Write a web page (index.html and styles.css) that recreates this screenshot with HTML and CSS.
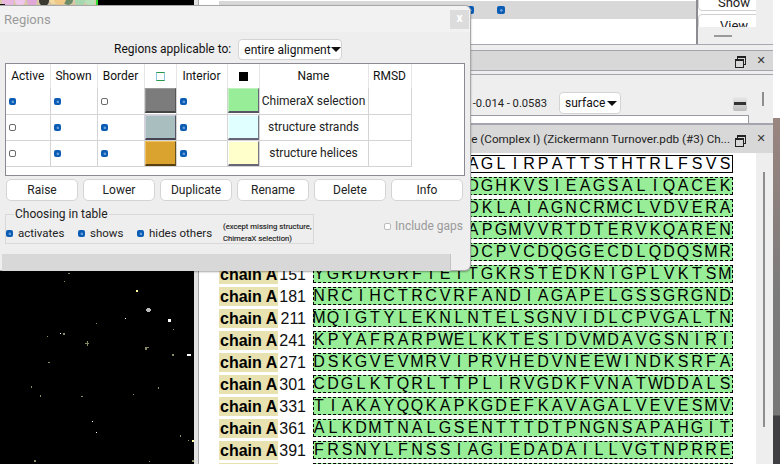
FILE: index.html
```html
<!DOCTYPE html>
<html lang="en">
<head>
<meta charset="utf-8">
<title>Regions</title>
<link rel="stylesheet" href="styles.css">
</head>
<body>
<div class="graphics">
  <svg class="scene" width="194" height="464" viewBox="0 0 194 464">
    <rect x="0" y="0" width="96" height="6" fill="#d8c8a8"/>
    <circle cx="8" cy="2" r="6" fill="#e8b8e0"/><circle cx="20" cy="1" r="5" fill="#f0c8ec"/><circle cx="32" cy="1" r="5" fill="#e0a8d8"/>
    <rect x="0" y="4" width="5" height="2" fill="#111"/>
    <circle cx="44" cy="1" r="5" fill="#3a3a30"/><circle cx="54" cy="0" r="4" fill="#f4dca0"/><circle cx="58" cy="0" r="4" fill="#e8d090"/>
    <circle cx="68" cy="0" r="5" fill="#6a8a68"/><circle cx="60" cy="-1" r="6" fill="#f0c888"/>
    <circle cx="80" cy="1" r="5" fill="#a8d8b0"/><circle cx="90" cy="1" r="5" fill="#b8e0b8"/>
    <rect x="96" y="0" width="2" height="6" fill="#30e030"/>
    <g fill="#8a8a60">
      <rect x="68" y="273" width="2" height="1"/><rect x="64" y="281" width="1" height="1"/><rect x="96" y="323" width="1" height="1"/>
      <rect x="63" y="333" width="2" height="2"/><rect x="47" y="336" width="1" height="1"/><rect x="85" y="343" width="4" height="1"/>
      <rect x="87" y="341" width="1" height="5"/><rect x="145" y="347" width="2" height="3"/><rect x="147" y="347" width="2" height="1"/>
      <rect x="172" y="354" width="2" height="2"/><rect x="173" y="329" width="1" height="1"/><rect x="48" y="362" width="2" height="1"/>
      <rect x="31" y="386" width="1" height="2"/><rect x="40" y="395" width="1" height="2"/><rect x="81" y="396" width="2" height="1"/>
      <rect x="133" y="394" width="1" height="1"/><rect x="158" y="387" width="1" height="2"/><rect x="180" y="435" width="1" height="2"/>
      <rect x="188" y="440" width="1" height="1"/><rect x="34" y="460" width="2" height="2"/><rect x="149" y="461" width="1" height="1"/><rect x="192" y="460" width="2" height="2"/>
    </g>
    <g fill="#fff">
      <rect x="125" y="318" width="1" height="1"/><rect x="60" y="333" width="1" height="1"/><rect x="92" y="421" width="1" height="1"/><rect x="96" y="432" width="1" height="1"/>
      <rect x="168" y="319" width="3" height="3"/><rect x="187" y="354" width="4" height="2"/>
    </g>
    <g fill="#bbb"><rect x="147" y="308" width="3" height="4"/><rect x="146" y="309" width="5" height="2"/></g>
    <g fill="#ffffa0"><rect x="136" y="290" width="2" height="2"/><rect x="192" y="440" width="2" height="2"/></g>
  </svg>
</div>
<div class="sash"></div>
<div class="main">
  <div class="top-panel">
    <div class="top-list">
      <div class="top-row"><span class="cb on top-a"></span><span class="cb on top-b"></span></div>
    </div>
    <div class="top-side">
      <div class="side-buttons">
        <div class="side-btn side-show"><span>Show</span></div>
        <div class="side-btn side-view"><span>View</span></div>
      </div>
      <div class="handle"></div>
    </div>
  </div>
  <div class="dock-title dock-one">
    <span class="dock-text"></span>
    <span class="float-icon"></span>
    <span class="close-icon">✕</span>
  </div>
  <div class="histogram-panel">
    <div class="histogram-main">
      <div class="controls">
        <span class="range">-0.014 - 0.0583</span>
        <span class="combo surface">surface<span class="arrow"></span></span>
        <span class="minus"></span>
      </div>
      <div class="hist-box"></div>
    </div>
    <div class="scroll-strip"><span class="thumb thumb-short"></span></div>
  </div>
  <div class="dock-title dock-two">
    <span class="dock-text">e (Complex I) (Zickermann Turnover.pdb (#3) Ch...</span>
    <span class="float-icon"></span>
    <span class="close-icon">✕</span>
  </div>
  <div class="sequence-panel">
    <div class="sequence">
      <div class="seq-row"><span class="chain">chain A</span><span class="num">1</span><span class="seq seq-name"><i>A</i><i>G</i><i>L</i><i>I</i><i>R</i><i>P</i><i>A</i><i>T</i><i>T</i><i>S</i><i>T</i><i>H</i><i>T</i><i>R</i><i>L</i><i>F</i><i>S</i><i>V</i><i>S</i></span></div>
      <div class="seq-row"><span class="chain">chain A</span><span class="num">31</span><span class="seq"><i>D</i><i>G</i><i>H</i><i>K</i><i>V</i><i>S</i><i>I</i><i>E</i><i>A</i><i>G</i><i>S</i><i>A</i><i>L</i><i>I</i><i>Q</i><i>A</i><i>C</i><i>E</i><i>K</i></span></div>
      <div class="seq-row"><span class="chain">chain A</span><span class="num">61</span><span class="seq"><i>D</i><i>K</i><i>L</i><i>A</i><i>I</i><i>A</i><i>G</i><i>N</i><i>C</i><i>R</i><i>M</i><i>C</i><i>L</i><i>V</i><i>D</i><i>V</i><i>E</i><i>R</i><i>A</i></span></div>
      <div class="seq-row"><span class="chain">chain A</span><span class="num">91</span><span class="seq"><i>A</i><i>P</i><i>G</i><i>M</i><i>V</i><i>V</i><i>R</i><i>T</i><i>D</i><i>T</i><i>E</i><i>R</i><i>V</i><i>K</i><i>Q</i><i>A</i><i>R</i><i>E</i><i>N</i></span></div>
      <div class="seq-row"><span class="chain">chain A</span><span class="num">121</span><span class="seq"><i>D</i><i>C</i><i>P</i><i>V</i><i>C</i><i>D</i><i>Q</i><i>G</i><i>G</i><i>E</i><i>C</i><i>D</i><i>L</i><i>Q</i><i>D</i><i>Q</i><i>S</i><i>M</i><i>R</i></span></div>
      <div class="seq-row"><span class="chain">chain A</span><span class="num">151</span><span class="seq"><i>Y</i><i>G</i><i>R</i><i>D</i><i>R</i><i>G</i><i>R</i><i>F</i><i>I</i><i>E</i><i>I</i><i>T</i><i>G</i><i>K</i><i>R</i><i>S</i><i>T</i><i>E</i><i>D</i><i>K</i><i>N</i><i>I</i><i>G</i><i>P</i><i>L</i><i>V</i><i>K</i><i>T</i><i>S</i><i>M</i></span></div>
      <div class="seq-row"><span class="chain">chain A</span><span class="num">181</span><span class="seq"><i>N</i><i>R</i><i>C</i><i>I</i><i>H</i><i>C</i><i>T</i><i>R</i><i>C</i><i>V</i><i>R</i><i>F</i><i>A</i><i>N</i><i>D</i><i>I</i><i>A</i><i>G</i><i>A</i><i>P</i><i>E</i><i>L</i><i>G</i><i>S</i><i>S</i><i>G</i><i>R</i><i>G</i><i>N</i><i>D</i></span></div>
      <div class="seq-row"><span class="chain">chain A</span><span class="num">211</span><span class="seq"><i>M</i><i>Q</i><i>I</i><i>G</i><i>T</i><i>Y</i><i>L</i><i>E</i><i>K</i><i>N</i><i>L</i><i>N</i><i>T</i><i>E</i><i>L</i><i>S</i><i>G</i><i>N</i><i>V</i><i>I</i><i>D</i><i>L</i><i>C</i><i>P</i><i>V</i><i>G</i><i>A</i><i>L</i><i>T</i><i>N</i></span></div>
      <div class="seq-row"><span class="chain">chain A</span><span class="num">241</span><span class="seq"><i>K</i><i>P</i><i>Y</i><i>A</i><i>F</i><i>R</i><i>A</i><i>R</i><i>P</i><i>W</i><i>E</i><i>L</i><i>K</i><i>K</i><i>T</i><i>E</i><i>S</i><i>I</i><i>D</i><i>V</i><i>M</i><i>D</i><i>A</i><i>V</i><i>G</i><i>S</i><i>N</i><i>I</i><i>R</i><i>I</i></span></div>
      <div class="seq-row"><span class="chain">chain A</span><span class="num">271</span><span class="seq"><i>D</i><i>S</i><i>K</i><i>G</i><i>V</i><i>E</i><i>V</i><i>M</i><i>R</i><i>V</i><i>I</i><i>P</i><i>R</i><i>V</i><i>H</i><i>E</i><i>D</i><i>V</i><i>N</i><i>E</i><i>E</i><i>W</i><i>I</i><i>N</i><i>D</i><i>K</i><i>S</i><i>R</i><i>F</i><i>A</i></span></div>
      <div class="seq-row"><span class="chain">chain A</span><span class="num">301</span><span class="seq"><i>C</i><i>D</i><i>G</i><i>L</i><i>K</i><i>T</i><i>Q</i><i>R</i><i>L</i><i>T</i><i>T</i><i>P</i><i>L</i><i>I</i><i>R</i><i>V</i><i>G</i><i>D</i><i>K</i><i>F</i><i>V</i><i>N</i><i>A</i><i>T</i><i>W</i><i>D</i><i>D</i><i>A</i><i>L</i><i>S</i></span></div>
      <div class="seq-row"><span class="chain">chain A</span><span class="num">331</span><span class="seq"><i>T</i><i>I</i><i>A</i><i>K</i><i>A</i><i>Y</i><i>Q</i><i>Q</i><i>K</i><i>A</i><i>P</i><i>K</i><i>G</i><i>D</i><i>E</i><i>F</i><i>K</i><i>A</i><i>V</i><i>A</i><i>G</i><i>A</i><i>L</i><i>V</i><i>E</i><i>V</i><i>E</i><i>S</i><i>M</i><i>V</i></span></div>
      <div class="seq-row"><span class="chain">chain A</span><span class="num">361</span><span class="seq"><i>A</i><i>L</i><i>K</i><i>D</i><i>M</i><i>T</i><i>N</i><i>A</i><i>L</i><i>G</i><i>S</i><i>E</i><i>N</i><i>T</i><i>T</i><i>T</i><i>D</i><i>T</i><i>P</i><i>N</i><i>G</i><i>N</i><i>S</i><i>A</i><i>P</i><i>A</i><i>H</i><i>G</i><i>I</i><i>T</i></span></div>
      <div class="seq-row"><span class="chain">chain A</span><span class="num">391</span><span class="seq"><i>F</i><i>R</i><i>S</i><i>N</i><i>Y</i><i>L</i><i>F</i><i>N</i><i>S</i><i>S</i><i>I</i><i>A</i><i>G</i><i>I</i><i>E</i><i>D</i><i>A</i><i>D</i><i>A</i><i>I</i><i>L</i><i>L</i><i>V</i><i>G</i><i>T</i><i>N</i><i>P</i><i>R</i><i>R</i><i>E</i></span></div>
      <div class="seq-row seq-last"><span class="chain"></span><span class="num"></span><span class="seq"></span></div>
    </div>
    <div class="scroll-strip"><span class="thumb thumb-long"></span></div>
  </div>
</div>
<div class="gutter"></div>

<section class="regions">
  <header class="win-title"><span>Regions</span><span class="win-close">x</span></header>
  <div class="win-body">
    <div class="applicable"><span>Regions applicable to:</span><span class="combo entire">entire alignment<span class="arrow"></span></span></div>
    <div class="table-box">
      <table class="region-table">
        <colgroup><col class="c-active"><col class="c-shown"><col class="c-border"><col class="c-swatch"><col class="c-interior"><col class="c-swatch"><col class="c-name"><col class="c-rmsd"></colgroup>
        <thead>
          <tr><th>Active</th><th>Shown</th><th>Border</th><th><span class="hdr-outline"></span></th><th>Interior</th><th><span class="hdr-fill"></span></th><th>Name</th><th>RMSD</th></tr>
        </thead>
        <tbody>
          <tr><td><span class="cb on"></span></td><td><span class="cb on"></span></td><td><span class="cb"></span></td><td class="swatch-cell"><span class="swatch s-gray"></span></td><td><span class="cb on"></span></td><td class="swatch-cell"><span class="swatch s-green"></span></td><td class="name">ChimeraX selection</td><td></td></tr>
          <tr><td><span class="cb"></span></td><td><span class="cb on"></span></td><td><span class="cb on"></span></td><td class="swatch-cell"><span class="swatch s-teal"></span></td><td><span class="cb on"></span></td><td class="swatch-cell"><span class="swatch s-cyan"></span></td><td class="name">structure strands</td><td></td></tr>
          <tr><td><span class="cb"></span></td><td><span class="cb on"></span></td><td><span class="cb on"></span></td><td class="swatch-cell"><span class="swatch s-gold"></span></td><td><span class="cb on"></span></td><td class="swatch-cell"><span class="swatch s-yellow"></span></td><td class="name">structure helices</td><td></td></tr>
        </tbody>
      </table>
    </div>
    <div class="actions">
      <button class="btn">Raise</button><button class="btn">Lower</button><button class="btn">Duplicate</button><button class="btn">Rename</button><button class="btn">Delete</button><button class="btn">Info</button>
    </div>
    <div class="options">
      <fieldset class="choosing">
        <legend>Choosing in table</legend>
        <span class="opt opt-1"><span class="cb on"></span>activates</span>
        <span class="opt opt-2"><span class="cb on"></span>shows</span>
        <span class="opt opt-3"><span class="cb on"></span>hides others</span>
        <span class="except">(except missing structure,<br>ChimeraX selection)</span>
      </fieldset>
      <span class="gaps"><span class="cb off"></span>Include gaps</span>
    </div>
    <div class="status"></div>
  </div>
</section>
</body>
</html>
```
FILE: styles.css
```css
* { box-sizing: border-box; }
html, body { margin: 0; padding: 0; }
body {
  width: 780px; height: 464px; overflow: hidden; display: flex; position: relative;
  background: #fff; font-family: Roboto, "Noto Sans", sans-serif; font-size: 12px; color: #111;
}
.graphics { width: 194px; height: 464px; background: #000; flex: none; }
.scene { display: block; }
.sash { width: 5px; height: 464px; flex: none; background: #e2e2e2; border-right: 1px solid #a8a8a8; }
.main { width: 574px; height: 464px; flex: none; display: flex; flex-direction: column; background: #eee; }
.gutter { width: 7px; height: 464px; flex: none; background: linear-gradient(#fff 0 118px, #9a8580 118px, #7a7a7a 300px, #777 415px, #3f3f44 416px); }

.top-panel { height: 45px; display: flex; flex: none; border-bottom: 1px solid #a8a8b0; }
.top-list { width: 499px; background: #fff; padding: 1px 0 0 20px; border-right: 2px solid #8c8c90; }
.top-row { height: 18px; background: #d8d8d8; display: flex; align-items: center; padding-left: 247px; gap: 23px; }
.top-side { flex: 1; background: #eee; position: relative; }
.side-buttons { width: 58px; height: 27px; background: #fff; overflow: hidden; }
.side-btn { width: 72px; height: 24px; border: 1px solid #d0d0d0; border-radius: 4px; text-align: center; color: #222; font-size: 13px; line-height: 15px; background: #fff; }
.side-show { margin-top: -13px; padding-top: 7px; }
.side-view { margin-top: 3px; padding-top: 3px; }
.handle { width: 18px; height: 2px; background: #9a9a9a; margin: 8px 0 0 16px; }

.dock-title {
  flex: none; display: flex; align-items: center; justify-content: flex-end; background: #d8d8d8;
  border: 1px solid #a4a4ac; border-left: 0; border-right: 0;
}
.dock-one { height: 21px; margin-top: 5px; }
.dock-two { height: 30px; border-bottom: 0; border-top: 2px solid #a4a4ac; }
.dock-text { color: #222; font-size: 11.7px; margin-right: 5px; white-space: nowrap; }
.float-icon { width: 9px; height: 9px; margin: 0 12px 0 0; position: relative; display: block; }
.float-icon::before { content: ""; position: absolute; left: 2px; top: 0; width: 7px; height: 6px; border: 1px solid #222; border-top-width: 2px; }
.float-icon::after { content: ""; position: absolute; left: 0; top: 3px; width: 7px; height: 6px; background: #d8d8d8; border: 1px solid #222; border-top-width: 2px; }
.close-icon { width: 10px; font-size: 11px; font-weight: bold; color: #333; line-height: 12px; margin-right: 7px; text-align: center; font-family: "DejaVu Sans", sans-serif; }

.histogram-panel { height: 49px; flex: none; margin-top: 3px; border-top: 1px solid #a4a4ac; display: flex; background: #eee; }
.histogram-main { width: 556px; display: flex; flex-direction: column; }
.controls { height: 40px; padding: 17px 8px 0 0; display: flex; align-items: flex-start; justify-content: flex-end; }
.range { margin: 3px 12px 0 0; font-size: 11.2px; line-height: 17px; color: #222; }
.surface { width: 62px; height: 22px; margin-right: 112px; }
.minus { width: 14px; height: 14px; margin-top: 5px; border-radius: 2px; background: linear-gradient(#e8e8e8, #bdbdbd); position: relative; display: block; }
.minus::after { content: ""; position: absolute; left: 1px; right: 1px; top: 5px; height: 3px; background: #333; }
.hist-box { height: 8px; width: 550px; background: #fff; border: 1px solid #9a9aa0; border-left: 0; border-bottom: 0; }
.scroll-strip { flex: 1; background: #eee; position: relative; }
.thumb { position: absolute; left: 7px; width: 2px; background: #8e8e8e; }
.thumb-short { top: 17px; height: 14px; }
.thumb-long { top: 19px; height: 255px; }

.combo { display: inline-flex; align-items: center; justify-content: space-between; padding: 0 3px 0 5px; background: #fff; border: 1px solid #d4d4d4; border-radius: 4px; font-size: 12px; color: #111; white-space: nowrap; }
.arrow { width: 0; height: 0; border: 5px solid transparent; border-top: 5px solid #111; border-bottom: 0; }

.sequence-panel { height: 311px; flex: none; display: flex; background: #fff; overflow: hidden; }
.sequence { width: 557px; flex: none; padding: 2px 0 0 20px; background: #fff; }
.seq-row { height: 22px; display: flex; align-items: flex-start; font-family: "Liberation Sans", Arial, sans-serif; font-size: 16px; color: #000; white-space: nowrap; }
.chain { width: 59px; height: 19px; background: #e8e1b0; font-weight: bold; line-height: 19px; padding-left: 1px; flex: none; }
.num { width: 28px; line-height: 19px; text-align: right; flex: none; color: #111; }
.seq { width: 420px; height: 18px; margin-left: 7px; background: #98ee98; border: 1px dashed #000; display: flex; justify-content: flex-end; flex: none; line-height: 16px; }
.seq-name { background: #fff; border-style: solid; }
.seq i { font-style: normal; width: 14px; flex: none; text-align: center; }

.regions {
  position: absolute; left: 0; top: 5px; width: 471px; height: 266px; background: #eee;
  border: 1px solid #a8a8a8; border-left: 0; border-radius: 0 6px 6px 0;
  box-shadow: 0 1px 2px rgba(0,0,0,.35);
}
.win-title { height: 26px; background: #f2f2f2; display: flex; justify-content: space-between; align-items: center; padding-left: 4px; color: #9a9a9a; font-size: 13px; border-radius: 0 6px 0 0; }
.win-close { width: 19px; height: 19px; margin-right: 1px; background: #dcdcdc; color: #fff; text-align: center; line-height: 17px; font-size: 12px; font-weight: bold; }
.win-body { padding: 0 0 0 5px; }
.applicable { height: 31px; padding-top: 7px; display: flex; justify-content: flex-start; align-items: flex-start; }
.applicable > span:first-child { margin: 2px 7px 0 109px; font-size: 12px; line-height: 17px; white-space: nowrap; }
.entire { height: 21px; width: 104px; }
.table-box { width: 460px; height: 113px; background: #fff; border: 1px solid #8a8a94; }
.region-table { width: 405px; table-layout: fixed; border-collapse: collapse; }
.c-active { width: 44px; } .c-shown { width: 47px; } .c-border { width: 47px; } .c-swatch { width: 32px; }
.c-interior { width: 51px; } .c-name { width: 109px; } .c-rmsd { width: 43px; }
.region-table th { height: 24px; font-weight: 400; font-size: 12px; text-align: center; padding: 0; border-right: 1px solid #e6e6e6; color: #111; }
.region-table td { height: 26px; padding: 0 0 0 3px; border-right: 1px solid #d4d4d4; border-bottom: 1px solid #d4d4d4; }
.region-table td.name { text-align: center; padding: 0; font-size: 12px; color: #222; white-space: nowrap; }
.region-table td.swatch-cell { padding: 0; }
.hdr-outline, .hdr-fill { display: inline-block; width: 9px; height: 9px; vertical-align: middle; }
.hdr-outline { background: #fff; border: 1px solid #2a9a4a; border-left-color: #88c8d8; border-right-color: #88c8d8; }
.hdr-fill { background: #000; }
.swatch { display: block; width: 31px; height: 25px; border: 1px solid; border-bottom-width: 2px; }
.s-gray { background: #7c7c7c; border-color: #999 #555 #444 #999; }
.s-teal { background: #a9bebe; border-color: #ccd #556 #445 #ccd; }
.s-gold { background: #daa32f; border-color: #f0c060 #665020 #5a4010 #f0c060; }
.s-green { background: #98ee98; border-color: #c0f0c0 #667 #556 #c0f0c0; }
.s-cyan { background: #e0ffff; border-color: #f4ffff #778 #667 #f4ffff; }
.s-yellow { background: #ffffcc; border-color: #fff #778 #667 #fff; }

.cb { display: inline-block; width: 7px; height: 7px; border-radius: 2px; background: #fff; border: 1px solid #6a6a6a; vertical-align: middle; flex: none; }
.cb.on { background: radial-gradient(circle at 55% 55%, #6a9ed8 0 1px, transparent 1.6px), #0b5cb5; border: 0; }
.cb.off { border-color: #bbb; }
.top-row .cb.on { width: 8px; height: 8px; }

.actions { display: flex; gap: 5px; margin: 3px 0 0 1px; }
.btn { width: 72px; height: 22px; padding: 0; background: #fff; border: 1px solid #d4d4d4; border-radius: 5px; font-family: inherit; font-size: 12px; color: #222; line-height: 19px; }
.options { display: flex; margin-top: 6px; height: 47px; position: relative; }
.choosing { width: 309px; height: 37px; margin: 0; padding: 0; border: 1px solid #d8d8d8; position: relative; display: block; }
.choosing legend { margin-left: 8px; padding: 0 1px; font-size: 12px; line-height: 14px; color: #222; }
.opt { position: absolute; top: 4px; display: flex; align-items: center; gap: 5px; font-size: 11.5px; line-height: 16px; color: #222; white-space: nowrap; }
.opt-1 { left: 0; } .opt-2 { left: 72px; } .opt-3 { left: 131px; }
.except { position: absolute; left: 217px; top: 0; font-size: 7.7px; line-height: 12px; color: #222; white-space: nowrap; -webkit-text-stroke: .15px #222; }
.gaps { position: absolute; left: 379px; top: 11px; display: flex; align-items: center; gap: 4px; color: #9a9a9a; font-size: 12px; line-height: 16px; white-space: nowrap; }
.status { width: 449px; height: 17px; margin: 0 0 0 -3px; background: #d8d8d8; border-right: 1px solid #c4c4c4; }
```
